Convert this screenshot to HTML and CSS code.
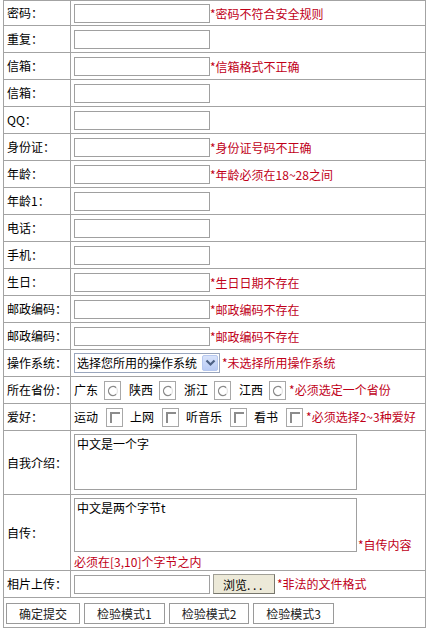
FILE: index.html
```html
<!DOCTYPE html>
<html lang="zh-CN">
<head>
<meta charset="utf-8">
<title>表单验证</title>
<link rel="stylesheet" href="styles.css">
</head>
<body>
<form class="page">
<table class="form">
<tr class="first"><td class="lbl">密码：</td><td class="val"><input class="txt" type="password"><span class="err">*密码不符合安全规则</span></td></tr>
<tr><td class="lbl">重复：</td><td class="val"><input class="txt" type="password"></td></tr>
<tr><td class="lbl">信箱：</td><td class="val"><input class="txt"><span class="err">*信箱格式不正确</span></td></tr>
<tr><td class="lbl">信箱：</td><td class="val"><input class="txt"></td></tr>
<tr><td class="lbl">QQ：</td><td class="val"><input class="txt"></td></tr>
<tr><td class="lbl">身份证：</td><td class="val"><input class="txt"><span class="err">*身份证号码不正确</span></td></tr>
<tr><td class="lbl">年龄：</td><td class="val"><input class="txt"><span class="err">*年龄必须在18~28之间</span></td></tr>
<tr><td class="lbl">年龄1：</td><td class="val"><input class="txt"></td></tr>
<tr><td class="lbl">电话：</td><td class="val"><input class="txt"></td></tr>
<tr><td class="lbl">手机：</td><td class="val"><input class="txt"></td></tr>
<tr><td class="lbl">生日：</td><td class="val"><input class="txt"><span class="err">*生日日期不存在</span></td></tr>
<tr><td class="lbl">邮政编码：</td><td class="val"><input class="txt"><span class="err">*邮政编码不存在</span></td></tr>
<tr><td class="lbl">邮政编码：</td><td class="val"><input class="txt"><span class="err">*邮政编码不存在</span></td></tr>
<tr><td class="lbl">操作系统：</td><td class="val"><div class="line"><span class="select"><select class="sel"><option>选择您所用的操作系统</option></select><span class="arrow"><svg width="11" height="8" viewBox="0 0 11 8"><path d="M1.5 1.5 L5.5 5.5 L9.5 1.5" fill="none" stroke="#4d6185" stroke-width="2.2"/></svg></span></span><span class="err">*未选择所用操作系统</span></div></td></tr>
<tr><td class="lbl">所在省份：</td><td class="val"><div class="line">
<span class="opt">广东</span><span class="rb"><svg width="12" height="12" viewBox="0 0 12 12"><path d="M9.2 2.8 A4.5 4.5 0 1 0 9.2 9.2" fill="none" stroke="#8a8a8a" stroke-width="1.3"/><path d="M9.2 2.8 A4.5 4.5 0 0 1 9.2 9.2" fill="none" stroke="#e6e6e6" stroke-width="1.3"/></svg></span>
<span class="opt">陕西</span><span class="rb"><svg width="12" height="12" viewBox="0 0 12 12"><path d="M9.2 2.8 A4.5 4.5 0 1 0 9.2 9.2" fill="none" stroke="#8a8a8a" stroke-width="1.3"/><path d="M9.2 2.8 A4.5 4.5 0 0 1 9.2 9.2" fill="none" stroke="#e6e6e6" stroke-width="1.3"/></svg></span>
<span class="opt">浙江</span><span class="rb"><svg width="12" height="12" viewBox="0 0 12 12"><path d="M9.2 2.8 A4.5 4.5 0 1 0 9.2 9.2" fill="none" stroke="#8a8a8a" stroke-width="1.3"/><path d="M9.2 2.8 A4.5 4.5 0 0 1 9.2 9.2" fill="none" stroke="#e6e6e6" stroke-width="1.3"/></svg></span>
<span class="opt">江西</span><span class="rb last"><svg width="12" height="12" viewBox="0 0 12 12"><path d="M9.2 2.8 A4.5 4.5 0 1 0 9.2 9.2" fill="none" stroke="#8a8a8a" stroke-width="1.3"/><path d="M9.2 2.8 A4.5 4.5 0 0 1 9.2 9.2" fill="none" stroke="#e6e6e6" stroke-width="1.3"/></svg></span>
<span class="err">*必须选定一个省份</span></div></td></tr>
<tr><td class="lbl">爱好：</td><td class="val"><div class="line">
<span class="opt">运动</span><span class="cb"><span class="cbi"></span></span>
<span class="opt">上网</span><span class="cb"><span class="cbi"></span></span>
<span class="opt">听音乐</span><span class="cb"><span class="cbi"></span></span>
<span class="opt">看书</span><span class="cb last"><span class="cbi"></span></span>
<span class="err">*必须选择2~3种爱好</span></div></td></tr>
<tr><td class="lbl">自我介绍：</td><td class="val intro"><textarea class="area area-intro">中文是一个字</textarea></td></tr>
<tr><td class="lbl">自传：</td><td class="val bio"><div class="bio-line"><textarea class="area area-bio">中文是两个字节t</textarea><span class="err">*自传内容</span></div><div class="err bio-msg">必须在[3,10]个字节之内</div></td></tr>
<tr><td class="lbl">相片上传：</td><td class="val"><div class="line"><input class="txt file-txt"><button type="button" class="browse">浏览. . .</button><span class="err file-err">*非法的文件格式</span></div></td></tr>
<tr><td class="actions" colspan="2"><div class="btns"><button type="button" class="btn">确定提交</button><button type="button" class="btn">检验模式1</button><button type="button" class="btn">检验模式2</button><button type="button" class="btn">检验模式3</button></div></td></tr>
</table>
</form>
</body>
</html>
```
FILE: styles.css
```css
html, body {
  margin: 0;
  padding: 0;
  background: #fff;
}
body {
  font-family: "Noto Sans CJK SC", "DejaVu Sans", sans-serif;
  font-size: 12px;
  color: #000;
}
.page {
  margin: 0;
  padding: 0 0 0 3px;
}
.form {
  border-collapse: collapse;
  width: 423px;
  border: 1px solid #8c8c8c;
}
.form td {
  border: 1px solid #a3a3a3;
  height: 26px;
  padding: 0 3px;
  vertical-align: middle;
  line-height: 14px;
}
.form tr.first td {
  height: 24px;
}
.form td.lbl {
  width: 60px;
  white-space: nowrap;
}
.form td.val {
  white-space: nowrap;
}
.txt {
  box-sizing: border-box;
  width: 136px;
  height: 19px;
  border: 1px solid #a0a0a0;
  padding: 0 2px;
  margin: 0;
  font: 12px "Noto Sans CJK SC", sans-serif;
  vertical-align: middle;
  background: #fff;
}
.err {
  color: #c00018;
  vertical-align: middle;
}
.line {
  display: flex;
  align-items: center;
}
.select {
  box-sizing: border-box;
  display: inline-flex;
  align-items: center;
  width: 146px;
  height: 20px;
  border: 1px solid #9aa6bd;
  background: #fff;
}
.sel {
  appearance: none;
  -webkit-appearance: none;
  border: 0;
  background: transparent;
  flex: 1;
  min-width: 0;
  font: 12px "Noto Sans CJK SC", sans-serif;
  color: #000;
  padding: 0 0 0 2px;
  height: 16px;
  line-height: 16px;
}
.arrow {
  box-sizing: border-box;
  display: inline-flex;
  align-items: center;
  justify-content: center;
  width: 16px;
  height: 16px;
  margin-right: 1px;
  border: 1px solid #b7c8ef;
  border-radius: 2px;
  background: linear-gradient(#d8e3fb, #b9cbf5);
}
.select + .err {
  margin-left: 2px;
}
.opt {
  display: inline-block;
}
.rb, .cb {
  box-sizing: border-box;
  display: inline-flex;
  align-items: flex-start;
  width: 17px;
  height: 19px;
  border: 1px solid #a8a8a8;
  background: #fff;
}
.rb {
  margin: 0 8px 0 6px;
  padding: 3px 0 0 2px;
}
.rb.last {
  margin-right: 3px;
}
.cb {
  margin: 0 7px 0 8px;
  padding: 3px 0 0 3px;
}
.cb.last {
  margin-right: 3px;
}
.cbi {
  box-sizing: border-box;
  width: 10px;
  height: 11px;
  border-top: 2px solid #8c8c8c;
  border-left: 2px solid #8c8c8c;
}
.area {
  box-sizing: border-box;
  width: 283px;
  border: 1px solid #a0a0a0;
  padding: 2px 2px;
  margin: 0;
  font: 12px/14px "Noto Sans CJK SC", sans-serif;
  resize: none;
  overflow: hidden;
  display: block;
  background: #fff;
}
.form td.intro {
  padding-top: 3px;
  padding-bottom: 4px;
}
.area-intro {
  height: 56px;
}
.form td.bio {
  padding-top: 3px;
  padding-bottom: 1px;
}
.bio-line {
  display: flex;
  align-items: flex-end;
}
.area-bio {
  height: 54px;
}
.bio-line .err {
  margin-left: 1px;
  line-height: 14px;
}
.bio-msg {
  margin-top: 2px;
  line-height: 15px;
}
.file-txt {
  width: 136px;
}
.browse {
  box-sizing: border-box;
  width: 62px;
  height: 20px;
  margin: 0 0 0 3px;
  padding: 0 0 0 9px;
  text-align: left;
  border: 1px solid #a09f96;
  border-right-color: #77766c;
  border-bottom-color: #77766c;
  background: #ece9d8;
  font: 12px "Noto Sans CJK SC", sans-serif;
  color: #000;
}
.file-err {
  margin-left: 2px;
}
.form td.actions {
  padding: 4px 0 3px 1px;
  height: 22px;
}
.btns {
  display: flex;
  gap: 4px;
}
.btn {
  box-sizing: border-box;
  height: 21px;
  margin: 0;
  padding: 0 12px;
  border: 1px solid #9a9a9a;
  background: #fff;
  font: 12px "Noto Sans CJK SC", sans-serif;
  color: #222;
  line-height: 19px;
}
.btn:first-child {
  margin-left: 1px;
}
```
